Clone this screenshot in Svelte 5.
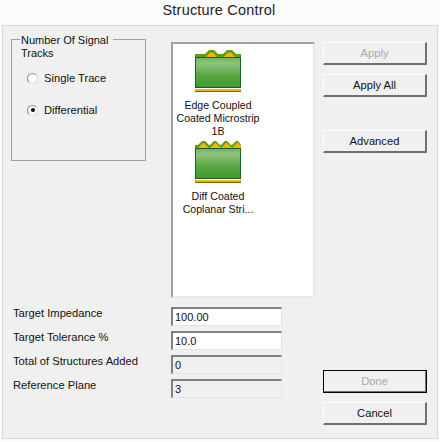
<script>
	const fields = [
		{ label: 'Target Impedance', value: '100.00', readonly: false },
		{ label: 'Target Tolerance %', value: '10.0', readonly: false },
		{ label: 'Total of Structures Added', value: '0', readonly: true },
		{ label: 'Reference Plane', value: '3', readonly: true }
	];
</script>

{#snippet bumps(n)}
	<svg class="thumb" width="46" height="46" viewBox="0 0 46 46">
		<defs>
			<linearGradient id="sub{n}" x1="0" y1="0" x2="0" y2="1">
				<stop offset="0" stop-color="#6fb35f" />
				<stop offset="0.2" stop-color="#8fc47f" />
				<stop offset="0.6" stop-color="#58a63f" />
				<stop offset="1" stop-color="#3f9a35" />
			</linearGradient>
		</defs>
		<rect x="0.5" y="8.5" width="45" height="30" fill="url(#sub{n})" stroke="#1a5c2c" />
		{#if n === 2}
			<path d="M0 8 L0 5 L3 5 L7 1 L10 1 L14 5 L15 5 L19 1 L21 1 L25 5 L26 5 L30 1 L32 1 L36 5 L37 5 L41 1 L43 1 L46 5 L46 8 Z" fill="#5f9e0e" />
			<path d="M3 8 L8 3 L9 3 L14 8 Z M15 8 L20 3 L21 3 L26 8 Z M26 8 L31 3 L32 3 L37 8 Z M37 8 L42 3 L43 3 L46 6 L46 8 Z" fill="#f2b600" />
		{:else}
			<path d="M0 8 L0 5 L10 5 L14 1 L19 1 L23 5 L28 5 L32 1 L37 1 L41 5 L46 5 L46 8 Z" fill="#5f9e0e" />
			<path d="M11 8 L15 3.5 L18 3.5 L22 8 Z M29 8 L33 3.5 L36 3.5 L40 8 Z" fill="#f2b600" />
		{/if}
		<rect x="0" y="40" width="46" height="2" fill="#f2b600" />
		<rect x="0" y="42" width="46" height="1" fill="#8a5a00" />
	</svg>
{/snippet}

<div class="window">
	<div class="title">Structure Control</div>
	<div class="panel">
		<div class="main">
			<div class="top">
				<div class="group">
					<div class="legend">Number Of Signal<br />Tracks</div>
					<div class="radio"><span class="dot"></span>Single Trace</div>
					<div class="radio on"><span class="dot"></span>Differential</div>
				</div>
				<div class="list">
					<div class="item">
						{@render bumps(1)}
						<span>Edge Coupled<br />Coated Microstrip<br />1B</span>
					</div>
					<div class="item">
						{@render bumps(2)}
						<span>Diff Coated<br />Coplanar Stri...</span>
					</div>
				</div>
			</div>
			<div class="form">
				{#each fields as f}
					<div class="row">
						<span class="lbl">{f.label}</span>
						<div class="input" class:readonly={f.readonly}>{f.value}</div>
					</div>
				{/each}
			</div>
		</div>
		<div class="side">
			<button class="btn" disabled>Apply</button>
			<button class="btn">Apply All</button>
			<button class="btn adv">Advanced</button>
			<button class="btn done" disabled>Done</button>
			<button class="btn">Cancel</button>
		</div>
	</div>
</div>

<style>
	:global(body) {
		margin: 0;
		background: #fcfcfc;
	}

	.window {
		width: 440px;
		height: 442px;
		font: 11.2px "Liberation Sans", Arial, sans-serif;
		color: #111;
		display: flex;
		flex-direction: column;
		overflow: hidden;
	}

	.title {
		height: 25px;
		box-sizing: border-box;
		padding: 1px 2px 0 0;
		text-align: center;
		font-size: 14.5px;
		line-height: 18px;
		letter-spacing: 0.2px;
		color: #222;
	}

	.panel {
		margin: 0 2px;
		height: 414px;
		box-sizing: border-box;
		background: #f0f0f0;
		border: 1px solid #d9d9d9;
		display: flex;
		padding: 13px 10px 0 8px;
	}

	.main {
		flex: none;
		width: 312px;
		display: flex;
		flex-direction: column;
	}

	.top {
		display: flex;
		align-items: flex-start;
	}

	.group {
		position: relative;
		width: 135px;
		height: 122px;
		box-sizing: border-box;
		border: 1px solid #a0a0a0;
		padding: 31px 0 0 15px;
		display: flex;
		flex-direction: column;
		gap: 18px;
	}

	.legend {
		position: absolute;
		left: 8px;
		top: -6px;
		width: 93px;
		padding-left: 1px;
		box-sizing: border-box;
		background: linear-gradient(#f0f0f0, #f0f0f0) no-repeat top / 100% 13px;
		line-height: 13px;
		font-size: 11px;
	}

	.radio {
		display: flex;
		align-items: center;
		gap: 6px;
		height: 14px;
	}

	.dot {
		width: 11px;
		height: 11px;
		box-sizing: border-box;
		border-radius: 50%;
		border: 1px solid #8a8a8a;
		border-right-color: #d8d8d8;
		border-bottom-color: #d8d8d8;
		background: #fff;
		position: relative;
	}

	.on .dot::after {
		content: "";
		position: absolute;
		left: 2.5px;
		top: 2.5px;
		width: 4px;
		height: 4px;
		border-radius: 50%;
		background: #000;
	}

	.list {
		margin: 3px 0 0 25px;
		width: 144px;
		height: 256px;
		box-sizing: border-box;
		background: #fff;
		border: 2px solid #a0a0a0;
		border-right-color: #e8e8e8;
		border-bottom-color: #e8e8e8;
		padding-top: 5px;
		display: flex;
		flex-direction: column;
		gap: 2px;
	}

	.item {
		display: flex;
		flex-direction: column;
		align-items: center;
		text-align: center;
		line-height: 13px;
		font-size: 10.6px;
		width: 90px;
	}

	.thumb {
		display: block;
		margin-bottom: 4px;
	}

	.form {
		margin-top: 9px;
		display: flex;
		flex-direction: column;
		gap: 5px;
	}

	.row {
		display: flex;
		justify-content: space-between;
		height: 19px;
	}

	.lbl {
		margin-left: 2px;
		line-height: 13px;
	}

	.input {
		width: 111px;
		height: 19px;
		box-sizing: border-box;
		background: #fff;
		border: 1px solid #e4e4e4;
		border-top: 2px solid #808080;
		border-left: 2px solid #808080;
		padding-left: 2px;
		line-height: 16px;
		font-size: 11px;
		margin-right: 41px;
	}

	.input.readonly {
		background: #f0f0f0;
	}

	.side {
		flex: none;
		margin-top: 3px;
		width: 104px;
		display: flex;
		flex-direction: column;
		gap: 9px;
	}

	.btn {
		height: 23px;
		box-sizing: border-box;
		padding: 0;
		background: #f0f0f0;
		color: #111;
		font: inherit;
		border: 1px solid #fff;
		border-right: 2px solid #707070;
		border-bottom: 2px solid #707070;
	}

	.btn:disabled {
		color: #a8a8a8;
	}

	.adv {
		margin-top: 24px;
	}

	.done {
		margin-top: 208px;
		outline: 1px solid #000;
		outline-offset: -1px;
	}
</style>
